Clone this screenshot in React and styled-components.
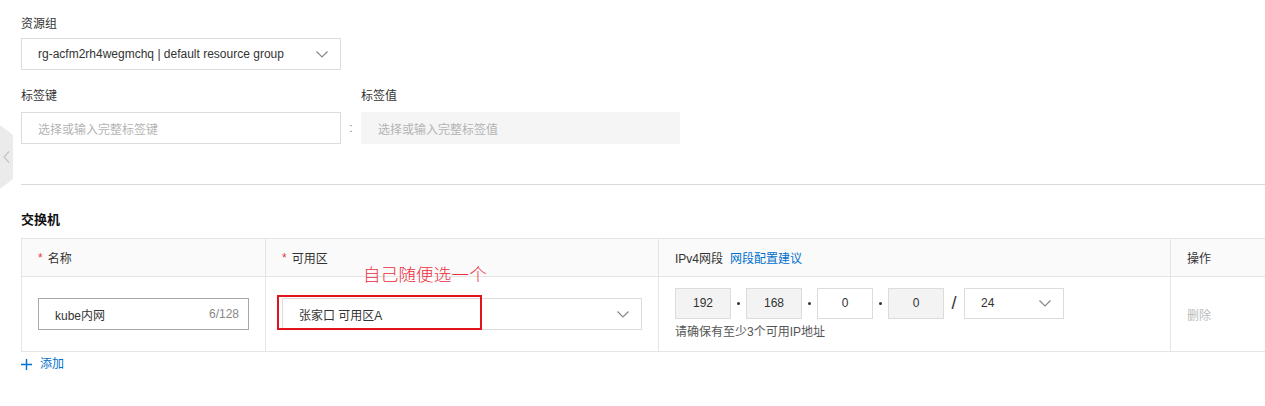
import React from 'react'
import styled, { createGlobalStyle } from 'styled-components'

const GlobalStyle = createGlobalStyle`
  html, body {
    margin: 0;
    padding: 0;
    background: #fff;
    overflow: hidden;
  }
  body {
    font-family: "Liberation Sans", "Noto Sans CJK SC", sans-serif;
    font-size: 12px;
    color: #333;
  }
`;

const Page = styled.div`
  position: relative;
  width: 1265px;
  height: 406px;
  padding: 15px 0 0 21px;
  box-sizing: border-box;
  overflow: hidden;
`;

const SideTab = styled.div`
  position: absolute;
  left: 0;
  top: 125px;
  width: 13px;
  height: 64px;
  background: #ebebeb;
  clip-path: polygon(0 0, 100% 10px, 100% calc(100% - 10px), 0 100%);
  display: flex;
  align-items: center;
  justify-content: center;
`;

const Field = styled.div`
  display: flex;
  flex-direction: column;
  gap: ${p => p.gap || 5}px;
`;

const Label = styled.div`
  line-height: 18px;
  color: #333;
`;

const FormRow = styled.div`
  display: flex;
  align-items: flex-end;
  margin-top: 17px;
`;

const Colon = styled.div`
  width: 20px;
  height: 32px;
  line-height: 32px;
  text-align: center;
  color: #888;
`;

const Box = styled.div`
  box-sizing: border-box;
  width: ${p => p.w}px;
  height: ${p => p.h || 32}px;
  border: 1px solid ${p => p.border || '#dcdcdc'};
  background: ${p => p.bg || '#fff'};
  display: flex;
  align-items: center;
  justify-content: ${p => p.center ? 'center' : 'space-between'};
  padding: ${p => p.center ? '0' : `0 ${p.pr || 12}px 0 16px`};
  color: ${p => p.muted ? '#b4b4b4' : '#333'};
`;

const Divider = styled.div`
  height: 1px;
  background: #d9d9d9;
  margin-top: 40px;
`;

const SectionTitle = styled.div`
  margin-top: 24px;
  font-size: 13px;
  font-weight: bold;
  line-height: 20px;
  color: #111;
  font-family: "Noto Sans CJK SC", sans-serif;
`;

const Table = styled.div`
  margin-top: 9px;
  width: 1270px;
  border-top: 1px solid #e5e5e5;
  border-left: 1px solid #e5e5e5;
`;

const Tr = styled.div`
  display: grid;
  grid-template-columns: 244px 393px 512px 1fr;
  height: ${p => p.h}px;
  background: ${p => p.head ? '#fafafa' : '#fff'};
  border-bottom: 1px solid #e5e5e5;
  box-sizing: border-box;
`;

const Td = styled.div`
  position: relative;
  display: flex;
  flex-direction: column;
  justify-content: center;
  padding: 0 16px;
  border-right: 1px solid #e5e5e5;
  color: ${p => p.muted ? '#bbb' : '#333'};
`;

const HeadText = styled.div`
  display: flex;
  align-items: center;
  gap: 5px;
  color: #333;
`;

const Star = styled.span`
  color: #e4393c;
`;

const Link = styled.span`
  color: #0070cc;
  margin-left: 2px;
`;

const IpLine = styled.div`
  display: flex;
  align-items: center;
`;

const Dot = styled.span`
  width: 15px;
  display: flex;
  justify-content: center;
  &::after {
    content: '';
    width: 3px;
    height: 3px;
    border-radius: 50%;
    background: #333;
  }
`;

const Slash = styled.span`
  width: 20px;
  text-align: center;
  font-size: 18px;
  color: #333;
`;

const Hint = styled.div`
  margin-top: 4px;
  line-height: 18px;
  color: #555;
`;

const Counter = styled.span`
  color: #888;
`;

const Mark = styled.div`
  position: absolute;
  left: 11px;
  top: 18px;
  width: 205px;
  height: 35px;
  border: 2px solid #e3131b;
  box-sizing: border-box;
`;

const Note = styled.div`
  position: absolute;
  left: 97px;
  top: -13px;
  font-size: 17.5px;
  line-height: 20px;
  font-weight: 300;
  letter-spacing: 0.2px;
  color: #ee2d3a;
  font-family: "Noto Sans CJK SC", serif;
  white-space: nowrap;
`;

const AddLink = styled.div`
  display: flex;
  align-items: center;
  gap: 8px;
  margin-top: 3px;
  line-height: 18px;
  color: #0070cc;
`;

const Chevron = ({ color = '#888', w = 12 }) => (
  <svg width={w} height={w / 2 + 1} viewBox="0 0 12 7" fill="none">
    <path d="M0.5 0.5L6 6L11.5 0.5" stroke={color} strokeWidth="1.2" />
  </svg>
);

export default function App() {
  return (
    <>
      <GlobalStyle />
      <Page>
        <SideTab>
          <svg width="7" height="12" viewBox="0 0 7 12" fill="none">
            <path d="M6 0.5L1 6L6 11.5" stroke="#c4c4c4" strokeWidth="1.2" />
          </svg>
        </SideTab>

        <Field>
          <Label>资源组</Label>
          <Box w={320}>
            <span>rg-acfm2rh4wegmchq | default resource group</span>
            <Chevron />
          </Box>
        </Field>

        <FormRow>
          <Field gap={7}>
            <Label>标签键</Label>
            <Box w={320} muted>选择或输入完整标签键</Box>
          </Field>
          <Colon>:</Colon>
          <Field gap={7}>
            <Label>标签值</Label>
            <Box w={319} border="#f5f5f5" bg="#f5f5f5" muted>选择或输入完整标签值</Box>
          </Field>
        </FormRow>

        <Divider />

        <SectionTitle>交换机</SectionTitle>

        <Table>
          <Tr head h={38}>
            <Td><HeadText><Star>*</Star>名称</HeadText></Td>
            <Td><HeadText><Star>*</Star>可用区</HeadText></Td>
            <Td><HeadText>IPv4网段<Link>网段配置建议</Link></HeadText></Td>
            <Td><HeadText>操作</HeadText></Td>
          </Tr>
          <Tr h={75}>
            <Td>
              <Box w={211} border="#a8a8a8" pr={9}>
                <span>kube内网</span>
                <Counter>6/128</Counter>
              </Box>
            </Td>
            <Td>
              <Box w={360}>
                <span>张家口 可用区A</span>
                <Chevron />
              </Box>
              <Mark />
              <Note>自己随便选一个</Note>
            </Td>
            <Td>
              <IpLine>
                <Box w={56} h={31} bg="#f2f3f2" center>192</Box>
                <Dot />
                <Box w={56} h={31} bg="#f2f3f2" center>168</Box>
                <Dot />
                <Box w={56} h={31} center>0</Box>
                <Dot />
                <Box w={56} h={31} bg="#f2f3f2" center>0</Box>
                <Slash>/</Slash>
                <Box w={100} h={31}>
                  <span>24</span>
                  <Chevron />
                </Box>
              </IpLine>
              <Hint>请确保有至少3个可用IP地址</Hint>
            </Td>
            <Td muted>删除</Td>
          </Tr>
        </Table>

        <AddLink>
          <svg width="11" height="11" viewBox="0 0 11 11">
            <path d="M5.5 0V11M0 5.5H11" stroke="#0070cc" strokeWidth="1.4" />
          </svg>
          添加
        </AddLink>
      </Page>
    </>
  )
}
